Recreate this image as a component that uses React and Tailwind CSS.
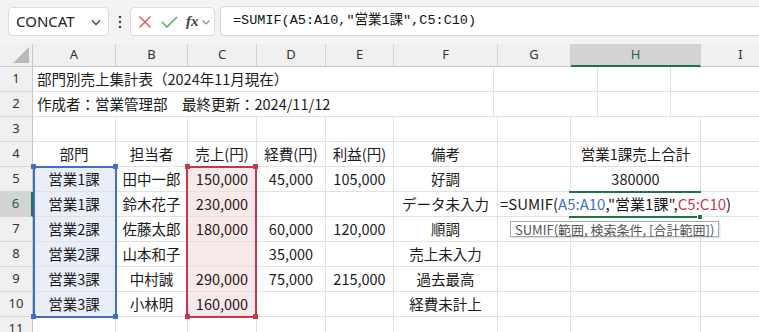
import React from 'react';

// --- sheet data ---
const cols = [
    { key: 'A', w: 83 },
    { key: 'B', w: 72 },
    { key: 'C', w: 69 },
    { key: 'D', w: 69 },
    { key: 'E', w: 68 },
    { key: 'F', w: 104 },
    { key: 'G', w: 73 },
    { key: 'H', w: 130 },
    { key: 'I', w: 80 },
];

const rows = [
    { n: 1, left: '部門別売上集計表（2024年11月現在）' },
    { n: 2, left: '作成者：営業管理部　最終更新：2024/11/12' },
    { n: 3, cells: {} },
    { n: 4, cells: { A: '部門', B: '担当者', C: '売上(円)', D: '経費(円)', E: '利益(円)', F: '備考', H: '営業1課売上合計' } },
    { n: 5, cells: { A: '営業1課', B: '田中一郎', C: '150,000', D: '45,000', E: '105,000', F: '好調', H: '380000' } },
    { n: 6, cells: { A: '営業1課', B: '鈴木花子', C: '230,000', F: 'データ未入力' } },
    { n: 7, cells: { A: '営業2課', B: '佐藤太郎', C: '180,000', D: '60,000', E: '120,000', F: '順調' } },
    { n: 8, cells: { A: '営業2課', B: '山本和子', D: '35,000', F: '売上未入力' } },
    { n: 9, cells: { A: '営業3課', B: '中村誠', C: '290,000', D: '75,000', E: '215,000', F: '過去最高' } },
    { n: 10, cells: { A: '営業3課', B: '小林明', C: '160,000', F: '経費未計上' } },
    { n: 11, cells: {} },
];

const jp = { fontFamily: '"Noto Sans CJK JP", "Noto Sans", sans-serif' };

const Corner = ({ className }) => (
    <div className={`absolute w-[5px] h-[5px] ${className}`} />
);

function Toolbar() {
    return (
        <div className="h-[44px] bg-[#f3f3f3] flex items-start pt-[7px]">
            <div className="ml-[8px] w-[101px] h-[29px] bg-white border border-[#dcdcdc] rounded-[4px] flex items-center justify-between pl-[7px] pr-[6px]">
                <span className="text-[15px] text-[#222]" style={{ fontFamily: '"Noto Sans", sans-serif' }}>CONCAT</span>
                <svg width="12" height="12" viewBox="0 0 12 12"><path d="M2 4.5 L6 8.5 L10 4.5" fill="none" stroke="#444" strokeWidth="1.3" /></svg>
            </div>
            <div className="w-[21px] h-[29px] flex items-center justify-center">
                <svg width="4" height="14" viewBox="0 0 4 14"><circle cx="2" cy="2" r="1.3" fill="#444" /><circle cx="2" cy="7" r="1.3" fill="#444" /><circle cx="2" cy="12" r="1.3" fill="#444" /></svg>
            </div>
            <div className="w-[85px] h-[29px] bg-white border border-[#dcdcdc] rounded-[4px] flex items-center pl-[6px]">
                <svg width="14" height="14" viewBox="0 0 14 14" className="ml-[1px]"><path d="M1.5 1.5 L12.5 12.5 M12.5 1.5 L1.5 12.5" stroke="#e0504f" strokeWidth="1.4" /></svg>
                <svg width="17" height="14" viewBox="0 0 17 14" className="ml-[9px]"><path d="M1 7 L6 12 L16 2" fill="none" stroke="#4aa35a" strokeWidth="1.4" /></svg>
                <span className="ml-[8px] text-[15px] italic font-bold text-[#444] leading-none" style={{ fontFamily: '"Liberation Serif", serif' }}>fx</span>
                <svg width="10" height="10" viewBox="0 0 10 10" className="ml-[2px]"><path d="M1.5 3.5 L5 7 L8.5 3.5" fill="none" stroke="#888" strokeWidth="1.1" /></svg>
            </div>
            <div className="ml-[5px] flex-1 h-[30px] -mt-[1px] bg-white border-y border-l border-[#d4d4d4] rounded-l-[4px] flex items-center pl-[12px]">
                <span className="text-[13.5px] text-[#111]" style={{ fontFamily: '"Liberation Mono", "Noto Sans CJK JP", monospace' }}>=SUMIF(A5:A10,"営業1課",C5:C10)</span>
            </div>
        </div>
    );
}

function Sheet() {
    return (
        <div className="relative">
            {/* column headers */}
            <div className="flex h-[23px]">
                <div className="w-[33px] shrink-0 bg-[#f0f0f0] border-r border-b border-[#c8c8c8] relative">
                    <svg width="18" height="17" viewBox="0 0 18 17" className="absolute right-[2px] bottom-[2px]"><path d="M17 0 L17 16 L1 16 Z" fill="#b9b9b9" /></svg>
                </div>
                {cols.map(c => (
                    <div
                        key={c.key}
                        style={{ width: c.w }}
                        className={`shrink-0 flex items-center justify-center text-[13px] border-r border-[#d2d2d2] ${c.key === 'H' ? 'bg-[#d3d3d3] border-b-2 border-b-[#217346] text-[#1e5e4a]' : 'bg-[#f0f0f0] border-b border-b-[#c8c8c8] text-[#333]'}`}
                    >
                        <span style={{ fontFamily: '"Noto Sans", sans-serif' }}>{c.key}</span>
                    </div>
                ))}
            </div>
            {/* rows */}
            {rows.map(r => (
                <div key={r.n} className="flex h-[25px]">
                    <div className={`w-[33px] shrink-0 flex items-center justify-center text-[13px] border-b border-[#d6d6d6] ${r.n === 6 ? 'bg-[#d3d3d3] border-r-2 border-r-[#217346] text-[#1e5e4a]' : 'bg-[#f0f0f0] border-r border-r-[#c8c8c8] text-[#333]'}`} style={{ fontFamily: '"Noto Sans", sans-serif' }}>
                        {r.n}
                    </div>
                    {r.left ? (
                        <>
                            <div className="shrink-0 w-[461px] border-r border-b border-[#e1e1e1] flex items-center pl-[4px] text-[14.5px] text-[#1a1a1a] whitespace-nowrap" style={jp}>{r.left}</div>
                            {cols.slice(5).map(c => (
                                <div key={c.key} style={{ width: c.w }} className="shrink-0 border-r border-b border-[#e1e1e1]" />
                            ))}
                        </>
                    ) : (
                        cols.map(c => {
                            const inRange = r.n >= 5 && r.n <= 10;
                            const bg = inRange && c.key === 'A' ? 'bg-[#e9eef8]' : inRange && c.key === 'C' ? 'bg-[#f9e8ea]' : 'bg-white';
                            return (
                                <div
                                    key={c.key}
                                    style={{ width: c.w, ...jp }}
                                    className={`shrink-0 border-r border-b border-[#e1e1e1] flex items-center justify-center text-[14.5px] text-[#1a1a1a] whitespace-nowrap ${bg}`}
                                >
                                    {r.cells[c.key] || ''}
                                </div>
                            );
                        })
                    )}
                </div>
            ))}

            {/* A5:A10 range */}
            <div className="absolute left-[33px] top-[122px] w-[84px] h-[152px] border-2 border-[#3f6fc6] pointer-events-none" />
            <Corner className="left-[31px] top-[120px] bg-[#3f6fc6]" />
            <Corner className="left-[113px] top-[120px] bg-[#3f6fc6]" />
            <Corner className="left-[31px] top-[270px] bg-[#3f6fc6]" />
            <Corner className="left-[113px] top-[270px] bg-[#3f6fc6]" />

            {/* C5:C10 range */}
            <div className="absolute left-[186px] top-[122px] w-[71px] h-[152px] border-2 border-[#c43a4b] pointer-events-none" />
            <Corner className="left-[185px] top-[120px] bg-[#c43a4b]" />
            <Corner className="left-[253px] top-[120px] bg-[#c43a4b]" />
            <Corner className="left-[185px] top-[270px] bg-[#c43a4b]" />
            <Corner className="left-[253px] top-[270px] bg-[#c43a4b]" />

            {/* in-cell editor H6 */}
            <div className="absolute left-[498px] top-[149px] w-[246px] h-[23px] bg-white flex items-center pl-[2px] text-[15px] text-[#1a1a1a] whitespace-nowrap" style={jp}>
                =SUMIF(<span className="text-[#3f6fc6]">A5:A10</span>,"営業1課",<span className="text-[#c43a4b]">C5:C10</span>)
            </div>
            <div className="absolute left-[569px] top-[147px] w-[132px] h-[2px] bg-[#217346]" />
            <div className="absolute left-[569px] top-[172px] w-[129px] h-[2px] bg-[#217346]" />
            <div className="absolute left-[697px] top-[170px] w-[6px] h-[6px] bg-[#217346] border border-white" />

            {/* tooltip */}
            <div className="absolute left-[510px] top-[177px] h-[16px] px-[4px] bg-white border border-[#a9a9a9] shadow-[1px_1px_2px_rgba(0,0,0,0.15)] flex items-center text-[13px] text-[#555] whitespace-nowrap leading-none" style={jp}>
                SUMIF(範囲, 検索条件, [合計範囲])
            </div>
        </div>
    );
}

export default function App() {
    return (
        <div className="w-[759px] h-[332px] overflow-hidden bg-white">
            <Toolbar />
            <Sheet />
        </div>
    );
}
